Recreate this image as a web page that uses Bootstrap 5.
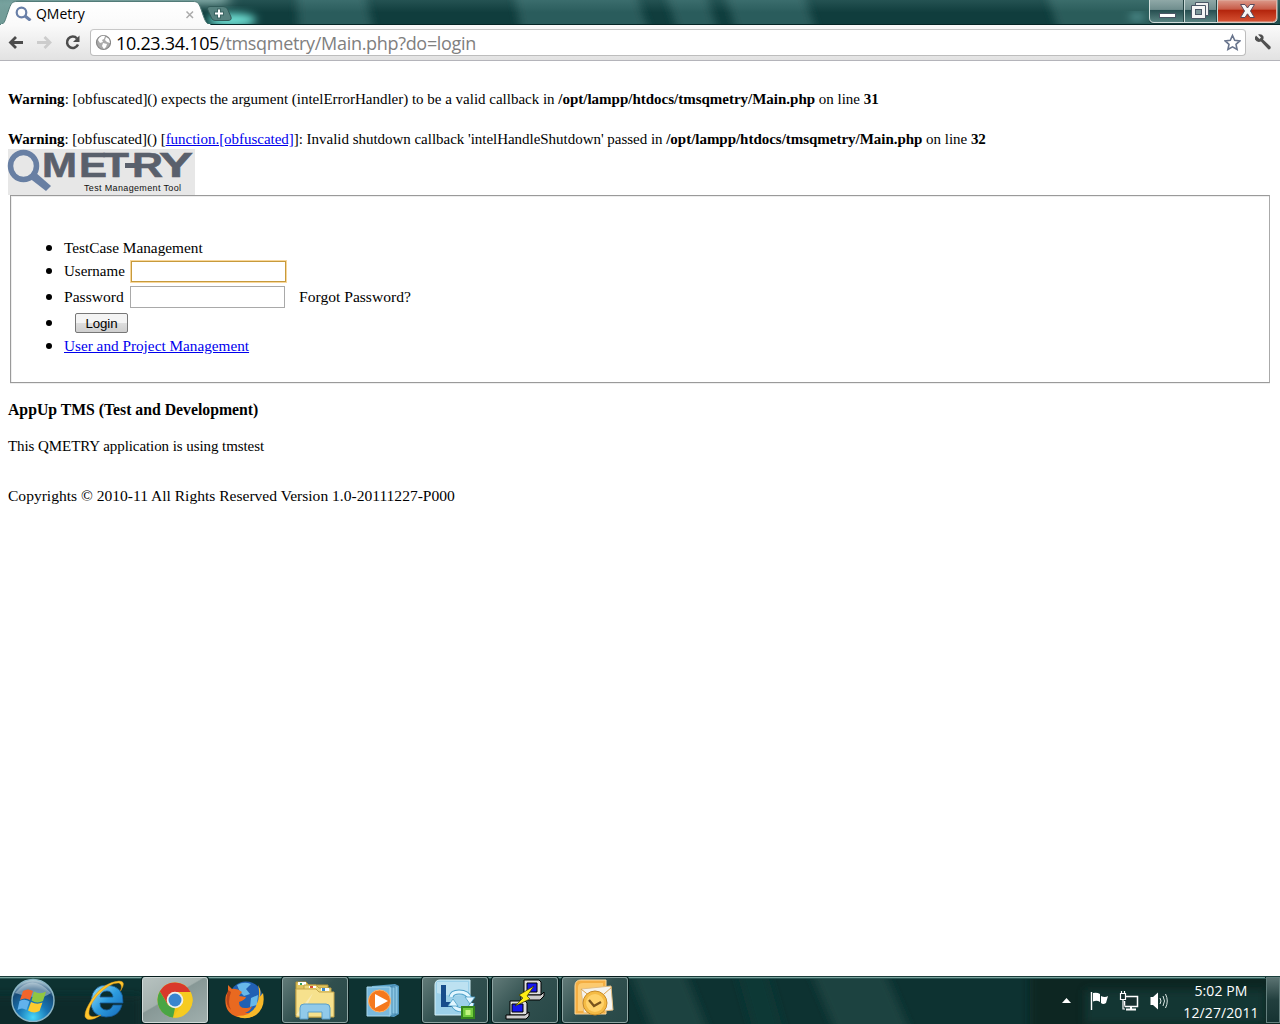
<!DOCTYPE html>
<html lang="en">
<head>
<meta charset="utf-8">
<title>QMetry</title>
<link href="https://cdn.jsdelivr.net/npm/bootstrap@5.3.0/dist/css/bootstrap.min.css" rel="stylesheet">
<script defer src="https://cdn.jsdelivr.net/npm/bootstrap@5.3.0/dist/js/bootstrap.bundle.min.js"></script>
<style>
body{width:1280px;height:1024px;overflow:hidden;background:#fff;color:#000;font-family:"Liberation Serif",serif;font-size:15px;line-height:20px}
svg{display:block;flex:none}
.ui-font{font-family:"Open Sans","Noto Sans",sans-serif}
.title-strip{height:25px;background:#174747}
.backdrop{left:0;top:0}
.tab-strip{width:232px;height:25px;padding-left:15px}
.tab-name{width:147px;margin-left:4px;font-size:14px;letter-spacing:-.05px;line-height:26px;padding-top:2px}
.win-controls{width:131px;height:25px}
.toolbar{height:36px;background:linear-gradient(#fafafa,#e2e2e2);border-bottom:1px solid #b4b4ba;padding:4px 8px 4px 8px}
.omnibox{width:1156px;height:27px;border:1px solid #bdbdbd;border-top-color:#c8c8c8;border-radius:4px;background:#fff;padding:0 4px 0 4px}
.address{font-size:18px;letter-spacing:-.31px;line-height:26px;margin-left:5px;color:#808080}
.viewport{height:915px;padding:28px 8px 0}
a.plain-link{color:#00e;text-decoration:underline}
.warn-one{letter-spacing:-.01px}
.warn-two{letter-spacing:-.027px}
.logo-art{overflow:visible}
.login-box{height:188px;margin:0 2px 17px;border:1px solid #9a9a9a;border-right-color:#aaa;box-shadow:inset 1px 1px #eee,0 1px #eee;padding:42px 0 0 13px}
.login-list{padding-left:40px}
.login-list li{height:26px;position:relative}
.login-list li:first-child,.login-list li:last-child{height:20px}
.login-list li::before{content:"";position:absolute;left:-18px;top:50%;width:6px;height:6px;margin-top:-3px;border-radius:50%;background:#000}
.item-head{font-size:15.300px}
.item-link{font-size:15.250px}
.u-lab{width:66px}
.p-lab,.forgot{font-size:15.600px}
.forgot{margin-left:14px}
.field{height:22px;width:155px;border:1px solid #a9a9a9;background:#fff;padding:0 2px;outline:0;font-size:13px}
.field-active{border:1px solid #c79a3c;box-shadow:0 0 0 1px #f8d79b;height:21px;width:155px;margin-left:1px}
.login-btn{height:20px;width:53px;margin-left:11px;border:1px solid #777;border-radius:2px;background:linear-gradient(#f4f4f4 0 48%,#ddd 52%,#cfcfcf);font:13.3px "Liberation Sans",sans-serif;padding:0;letter-spacing:-.1px}
.app-line{font-size:15.750px}
.use-line{letter-spacing:-.075px;margin-bottom:30px}
.copy-line{font-size:15.560px}
.taskbar{height:48px;padding-top:1px;background:#0d3231}
.task-row{gap:4px;padding-left:2px}
.task-slot{width:66px;height:46px;border:1px solid transparent;border-radius:3px}
.task-open{border-color:#8ea5a3;background:linear-gradient(135deg,#617a78,#304f4e 50%,#284847);box-shadow:0 0 0 1px #061c1c}
.task-front{border-color:#d0dad8;background:linear-gradient(150deg,#b7c2c0 0,#a4b1ae 42%,#879896 44%,#a0afad);box-shadow:0 0 0 1px #061c1c}
.clock{color:#fff;font-size:14px;letter-spacing:.1px;line-height:22px;width:90px;padding-top:3px}
.tray{margin-right:2px}
.peek{width:14px;height:46px;border:1px solid #64807e;background:linear-gradient(#5a7271,#223f3e 50%,#163332)}
</style>
</head>
<body>
<div class="d-flex flex-column">
<header>
<div class="title-strip position-relative d-flex justify-content-between">
<svg class="backdrop position-absolute" width="1280" height="25">
<defs>
<filter id="b1" x="-50%" y="-50%" width="200%" height="200%"><feGaussianBlur stdDeviation="4"/></filter>
<filter id="b2" x="-50%" y="-80%" width="200%" height="260%"><feGaussianBlur stdDeviation="7 4"/></filter>
<linearGradient id="shade" x2="0" y2="1"><stop offset="0" stop-color="#9cc" stop-opacity=".15"/><stop offset=".5" stop-color="#9cc" stop-opacity="0"/></linearGradient>
<linearGradient id="tabg" x2="0" y2="1"><stop stop-color="#fff"/><stop offset="1" stop-color="#fafafa"/></linearGradient>
</defs>
<rect width="1280" height="25" fill="#103d3d"/>
<g filter="url(#b1)" fill="#2b5b5b"><path d="M295 -25H361L378 50H300Z"/><path d="M510 -25H630L655 50H525Z"/><path d="M659 -25H700L724 50H684Z"/><path d="M719 -25H798L822 50H742Z"/><path d="M1040 -25H1280V50H1065Z" fill="#2a5c5a"/></g>
<rect x="-10" y="-5" width="30" height="35" fill="#739d99" filter="url(#b1)"/>
<rect x="18" y="-10" width="210" height="15" fill="#7da39f" filter="url(#b2)"/>
<ellipse cx="232" cy="20" rx="24" ry="7" fill="#6ee0d4" filter="url(#b1)"/>
<ellipse cx="1137" cy="17" rx="8" ry="3" fill="#5fa3a3" filter="url(#b1)"/>
<rect width="1280" height="25" fill="url(#shade)"/>
<path d="M208 24.5H1280" stroke="#062626"/>
<path d="M0 25C5 24 5 20 8 12C11 3 12 1.500 17 1.500H193C198 1.500 199 3 202 12C205 21 206 24 211 25Z" fill="url(#tabg)" stroke="#527b78" stroke-width="1"/>
<path d="M1 25H210" stroke="#fafafa" stroke-width="2"/>
<path d="M207.500 9Q207 6.500 210 6.500H223Q226 6.500 227.500 9L231 17Q232 20.500 228 20.500H215Q212.500 20.500 211.500 18Z" fill="#56817e" stroke="#315b59"/>
<path d="M219 8.500V18.500M214 13.500H224" stroke="#3a6462" stroke-width="4"/><path d="M219 9.500V17.500M215 13.500H223" stroke="#fff" stroke-width="2"/>
</svg>
<div class="tab-strip ui-font d-flex align-items-center position-relative">
<svg width="17" height="17" viewBox="0 0 17 17"><g transform="translate(0 2)"><circle cx="6.500" cy="6.500" r="4.800" fill="none" stroke="#687fa8" stroke-width="2.200"/><path d="M10 10L15.500 14.500" stroke="#687fa8" stroke-width="3"/></g></svg>
<div class="tab-name">QMetry</div>
<svg width="14" height="25"><path d="M3.500 11.500L10 18M10 11.500L3.500 18" stroke="#aaa" stroke-width="1.500"/></svg>
</div>
<svg class="win-controls position-relative" viewBox="0 0 131 25">
<defs><linearGradient id="wg" x2="0" y2="1"><stop stop-color="#8fa8a7"/><stop offset=".42" stop-color="#708e8e"/><stop offset=".46" stop-color="#274f51"/><stop offset="1" stop-color="#5b8583"/></linearGradient><linearGradient id="wr" x2="0" y2="1"><stop stop-color="#dc9a8b"/><stop offset=".42" stop-color="#c75b47"/><stop offset=".46" stop-color="#b3240c"/><stop offset="1" stop-color="#d65233"/></linearGradient></defs>
<path d="M0 0V19Q0 24 5 24H123Q128.500 24 128.500 19V0" fill="#173b3b"/>
<path d="M.5 0V18Q.5 22.500 5 22.500H123.500Q128 22.500 128 18V0" fill="url(#wg)" stroke="#d3dfdd"/>
<path d="M68.500 0H127.500V18Q127.500 22 123.500 22H68.500Z" fill="url(#wr)" stroke="#dfb3a6"/>
<path d="M35.500 0V22M68.500 0V22" stroke="#cadad8"/><path d="M34.500 0V22M67.500 0V22" stroke="#254544"/>
<rect x="10.500" y="13.500" width="16" height="4" fill="#fff" stroke="#4a5665"/>
<path d="M46.500 2.500H59.500V15.500H46.500Z" fill="#eee" stroke="#4a5665"/><path d="M42.500 5.500H56.500V18.500H42.500Z" fill="#f5f5f5" stroke="#4a5665"/><rect x="46.500" y="9.500" width="6" height="5" fill="#7c9699" stroke="#4a5665"/>
<path d="M91.500 4.500H96L98.500 8L101 4.500H105.500L101.500 11L105.500 17.500H101L98.500 13.800L96 17.500H91.500L95.500 11Z" fill="#f6f6f6" stroke="#59485a"/>
</svg>
</div>
<div class="toolbar ui-font d-flex justify-content-between">
<div class="d-flex">
<svg width="82" height="27"><path d="M15 13.500H3M8 8L2.500 13.500L8 19" fill="none" stroke="#4c4c4c" stroke-width="2.800"/><path d="M29 13.500H42M36.500 8L42 13.500L36.500 19" fill="none" stroke="#ccc" stroke-width="2.800"/><path d="M69 9.500A5.700 5.700 0 1 0 70 15.500" fill="none" stroke="#4c4c4c" stroke-width="2.500"/><path d="M71.500 6.500V13H65Z" fill="#4c4c4c"/></svg>
<div class="omnibox d-flex align-items-center">
<svg width="16" height="25"><circle cx="8.500" cy="12.500" r="7" fill="#aaa" stroke="#888" stroke-width="1.200"/><path d="M4 8Q7 5 10 6L9 9L7 10L8 12L5 13L3 10ZM11 7L14 9L15 13L12 12L10 10ZM8 13L12 14L11 17L9 19L7 16Z" fill="#fff"/></svg>
<div class="address flex-grow-1"><span class="text-black">10.23.34.105</span>/tmsqmetry/Main.php?do=login</div>
<svg width="17" height="25"><path d="M8.500 5.500L10.700 10.300L15.800 10.900L12 14.300L13.100 19.500L8.500 16.900L3.900 19.500L5 14.300L1.200 10.900L6.300 10.300Z" fill="#fff" stroke="#68748c" stroke-width="1.600"/></svg>
</div>
</div>
<svg width="19" height="27"><path d="M3 6.500L6.500 10L8 8.500L5 5.500Q9 4.500 10.500 7.500Q11 9.500 10 10.500L17.500 17.500Q18.500 20 15.500 20.500L8 12.500Q4 14 2 10.500Q1.500 8 3 6.500Z" fill="#505050"/></svg>
</div>
</header>
<main class="viewport">
<div class="warn-one"><b>Warning</b>: [obfuscated]() expects the argument (intelErrorHandler) to be a valid callback in <b>/opt/lampp/htdocs/tmsqmetry/Main.php</b> on line <b>31</b></div>
<div class="warn-two mt-3 pt-1"><b>Warning</b>: [obfuscated]() [<a class="plain-link" href="#">function.[obfuscated]</a>]: Invalid shutdown callback 'intelHandleShutdown' passed in <b>/opt/lampp/htdocs/tmsqmetry/Main.php</b> on line <b>32</b></div>
<svg class="logo-art" width="187" height="46" font-family="Liberation Sans, sans-serif">
<rect width="187" height="46" fill="#e7e7e7"/>
<ellipse cx="15.500" cy="17" rx="13" ry="13.500" fill="none" stroke="#687fa3" stroke-width="5.500"/><path d="M20 28L27 23L43 37L38 42Z" fill="#687fa3"/>
<g font-weight="bold" font-size="35.500" fill="#5a606c" stroke="#5a606c" stroke-width=".6"><text x="34" y="28" textLength="35" lengthAdjust="spacingAndGlyphs">M</text><text x="71" y="28" textLength="28" lengthAdjust="spacingAndGlyphs">E</text><text x="95" y="28" textLength="26" lengthAdjust="spacingAndGlyphs">T</text><text x="124" y="28" textLength="31" lengthAdjust="spacingAndGlyphs">R</text><text x="151" y="28" textLength="34" lengthAdjust="spacingAndGlyphs">Y</text></g><rect x="117" y="14" width="12" height="5" fill="#5a606c"/>
<text x="76" y="41.500" font-size="9" textLength="97" fill="#111">Test Management Tool</text>
</svg>
<div class="login-box">
<ul class="login-list list-unstyled mb-0">
<li class="item-head">TestCase Management</li>
<li class="d-flex align-items-center"><label class="u-lab" for="user">Username</label><input id="user" class="field field-active"></li>
<li class="d-flex align-items-center"><label class="u-lab p-lab" for="pass">Password</label><input id="pass" class="field" type="password"><span class="forgot">Forgot Password?</span></li>
<li class="d-flex align-items-center"><button class="login-btn">Login</button></li>
<li><a class="plain-link item-link" href="#">User and Project Management</a></li>
</ul>
</div>
<p class="app-line mb-3"><b>AppUp TMS (Test and Development)</b></p>
<p class="use-line">This QMETRY application is using tmstest</p>
<p class="copy-line mb-0">Copyrights © 2010-11 All Rights Reserved Version 1.0-20111227-P000</p>
</main>
<footer class="taskbar position-relative d-flex justify-content-between">
<svg class="backdrop position-absolute" width="1280" height="48">
<rect width="1280" height="48" fill="#0d3231"/>
<g filter="url(#b1)"><path d="M627 -10H682L710 60H655Z" fill="#1f4241"/><path d="M808 -10H882L912 60H838Z" fill="#1f4241"/><path d="M735 -10H765L785 60H755Z" fill="#113736"/><rect x="1030" y="-10" width="260" height="70" fill="#082624"/><rect x="-10" y="20" width="150" height="40" fill="#0a2a29"/></g>
<rect x="1085" y="14" width="180" height="34" fill="#183d3a" filter="url(#b1)" opacity=".7"/>
<path d="M0 .5H1280" stroke="#193c3a"/><path d="M0 1.500H1265" stroke="#7ba49e"/><path d="M0 2.500H1280" stroke="#2c5956"/>
</svg>
<nav class="task-row d-flex position-relative">
<svg class="task-slot" viewBox="1 1 64 44"><defs><radialGradient id="orb" cx=".5" cy=".9" r=".9"><stop stop-color="#48d7fa"/><stop offset=".4" stop-color="#1875b5"/><stop offset=".75" stop-color="#174a76"/><stop offset="1" stop-color="#c7dbe2"/></radialGradient></defs><circle cx="31" cy="23.500" r="21" fill="url(#orb)" stroke="#8bb5c5" stroke-width="1.500"/><path d="M13 16Q30 -5 49 16Q40 22 31 20Q22 19 13 16Z" fill="#dae7ec" opacity=".45"/><path d="M21 14Q26 11 31 14L28 23Q23 20 18 23Z" fill="#f2652b"/><path d="M32 14.500Q38 18 44 14.500L41 24Q35 27 29.500 23.500Z" fill="#91c640"/><path d="M17.500 24Q23 21.500 27.500 24.500L24.500 33Q20 30 15.500 33Z" fill="#62b2ec"/><path d="M29 25Q35 28 40.500 25.500L37.500 34Q32 37 26 33.500Z" fill="#fecb2f"/></svg>
<svg class="task-slot" viewBox="1 1 64 44"><defs><linearGradient id="ie" x2="1" y2="1"><stop stop-color="#9ce2fc"/><stop offset=".5" stop-color="#2d9cdf"/><stop offset="1" stop-color="#1468b9"/></linearGradient></defs><path d="M50 28Q47 40 34 40Q18 39 19 23Q21 8 35 8Q52 9 51 26H28Q28 33 35 33Q39 33 41 28ZM28 20H41Q40 14 35 14Q29 14 28 20Z" fill="url(#ie)" stroke="#17578f" stroke-width=".8" fill-rule="evenodd"/><path d="M48.500 14Q55 4 47 4Q32 5 20 22Q9 39 15 42Q20 44 29 38Q18 42 17 37Q16 30 25 19Q38 5 47 6Q51 8 48.500 14Z" fill="#ffc72e" stroke="#d89216" stroke-width=".5"/></svg>
<svg class="task-slot task-front" viewBox="0 1 64 44"><circle cx="32" cy="23" r="17.500" fill="#f3c518"/><path d="M16.800 14.200A17.500 17.500 0 0 1 47.500 15H32L24.500 27Z" fill="#d9392b"/><path d="M16.800 14.200L25 28L32 31L30 40.400A17.500 17.500 0 0 1 16.800 14.200Z" fill="#49a544"/><path d="M39.500 27L30 40.500A17.500 17.500 0 0 0 47.500 15H32Z" fill="#f6cb22"/><circle cx="32" cy="23" r="8.300" fill="#f0f0eb"/><circle cx="32" cy="23" r="6.500" fill="#3985cf"/></svg>
<svg class="task-slot" viewBox="0 0 64 44"><circle cx="33" cy="20" r="16.500" fill="#2160b3"/><path d="M24 7Q31 3 38 6L33 11L37 16L31 18L27 14ZM38 20L45 17L44 27L37 29Z" fill="#67b8ea"/><path d="M15 7L19 11Q24 10 29 14L26 18L33 19Q32 22 26 24Q26 30 32 30Q37 30 39 28Q38 33 32 35Q42 36 48 28Q45 40 31 40Q16 39 13 28Q11 18 15 14Z" fill="#e96920"/><path d="M45 7Q49 13 46.500 19L50 15Q53 29 43 37Q32 43 24 38Q38 38 43 28Q48 18 45 7Z" fill="#f7b829"/><path d="M15 12L18 14Q14 25 18 32Q12 27 14 17Z" fill="#b94519"/></svg>
<svg class="task-slot task-open" viewBox="1 1 64 44"><path d="M14 5H24L27 8H46V38H14Z" fill="#dfc45f" stroke="#b99737"/><path d="M16 5H24V8H16Z" fill="#fff"/><path d="M18 6H20V8H18Z" fill="#31a060"/><path d="M22 8H34L37 11H49V40H22Z" fill="#edd978" stroke="#bca045"/><path d="M27 9H34V11H27Z" fill="#fff"/><path d="M28 9H31V11H28Z" fill="#d95034"/><path d="M14 12H34L37 15H52V40H14Z" fill="#f6e18d" stroke="#c5a54b"/><path d="M39 11H47V14H39Z" fill="#f6fbff"/><path d="M40 11H43V14H40Z" fill="#3b88ca"/><path d="M14 38L31 16L20 39Z" fill="#fff" opacity=".35"/><path d="M18 42V31Q18 27 22 27H44Q48 27 48 31V42H40V35H26V42Z" fill="#91caea" stroke="#5b9ec8"/></svg>
<svg class="task-slot" viewBox="1 1 64 44"><path d="M20 9L43 7L47 9V37L42 40L20 37Z" fill="#579fc7"/><path d="M35 10H43V38H35ZM40 9H46V37H40Z" fill="#8ac7e4" stroke="#397fa8" stroke-width=".7"/><path d="M15 10H38V39H15Z" fill="#79b9dd" stroke="#a9d8ed"/><circle cx="27.500" cy="24" r="11" fill="#f5791d" stroke="#ffb56a"/><path d="M23 17L36 24L23 31Z" fill="#fff"/></svg>
<svg class="task-slot task-open" viewBox="1 1 64 44"><path d="M13 38V8Q13 3 18 3H48V32Q48 38 42 38Z" fill="#9cd0e9" stroke="#d4f0f8"/><path d="M15 5H46V17Q31 21 15 16Z" fill="#d4edf7" opacity=".6"/><path d="M19 8H24V25H33V30H19Z" fill="#174c8b"/><g fill="none" stroke-linejoin="round"><path d="M29 20Q30 15 37 15Q46 15 48 22M50 26Q49 33 41 33Q33 33 31 27" stroke="#4a9ec7" stroke-width="5"/><path d="M29 20Q30 15 37 15Q46 15 48 22M50 26Q49 33 41 33Q33 33 31 27" stroke="#e1f6ff" stroke-width="3.200"/></g><path d="M43 20H53L48 27ZM26 29L31 22L36 29Z" fill="#e1f6ff" stroke="#4a9ec7" stroke-width=".8"/><rect x="40" y="30" width="12" height="11" fill="#72cc3e" stroke="#35861e" stroke-width="2"/><rect x="43.500" y="33" width="5" height="5" fill="#c1f57f"/></svg>
<svg class="task-slot task-open" viewBox="1 1 64 44"><g stroke="#000" stroke-width="1"><path d="M32 3H47L49 5V18H32Z" fill="#ddd"/><path d="M35 6H45V15H35Z" fill="#1717ee"/><path d="M29 18H49L52 15V19L48 23H29Z" fill="#ccc"/><path d="M18 24H33L35 26V38H18Z" fill="#ddd"/><path d="M20 27H31V35H20Z" fill="#1717ee"/><path d="M14 38H33L37 35V39L34 42H14Z" fill="#ccc"/></g><path d="M42 9L27 18L31 21L23 29L38 22L35 19Z" fill="#ffed15" stroke="#383600" stroke-width=".7"/></svg>
<svg class="task-slot task-open" viewBox="1 1 64 44"><path d="M13 37V9Q13 3 19 3H44V37Z" fill="#f4ae43" stroke="#ffd99c"/><path d="M16 34V10Q16 6 21 6H41V15L24 34Z" fill="#ffd582" opacity=".7"/><path d="M19 12L49 9L51 33L22 36Z" fill="#f5f3ef" stroke="#e2be83"/><path d="M19 12L34 24L50 10" fill="none" stroke="#dda34d"/><circle cx="33" cy="26" r="12" fill="#f5bb45" stroke="#c68a27" stroke-width="1"/><circle cx="33" cy="26" r="9" fill="#ffd26a"/><path d="M27 23L32 29L39 25" fill="none" stroke="#79531c" stroke-width="2.300"/></svg>
</nav>
<div class="d-flex position-relative ui-font">
<svg class="tray" width="114" height="46" viewBox="1060 977 114 46"><path d="M1062 1003L1066.500 998L1071 1003Z" fill="#fff"/><path d="M1091.500 992V1010" stroke="#fff" stroke-width="1.400"/><path d="M1093 993Q1097 992 1100 994V1002Q1097 1000 1093 1001.500ZM1101 996Q1105 998 1108 996L1106 1003Q1103 1005 1101 1003Z" fill="#fff"/><path d="M1125.500 996.500H1137.500V1006.500H1124.500V1001" fill="#17302f" stroke="#fff" stroke-width="1.500"/><path d="M1131 1007V1010M1126 1009.500H1136" stroke="#fff" stroke-width="2"/><path d="M1120.500 993.500H1125.500V999.500H1120.500ZM1121.500 991V993M1124.500 991V993M1123 1000V1009H1125" fill="#17302f" stroke="#fff" stroke-width="1.200"/><path d="M1150.500 997H1153L1158 992.500V1009.500L1153 1005H1150.500Z" fill="#fff"/><path d="M1160 998Q1162 1001 1160 1004M1163 996Q1166 1001 1163 1006M1165.500 994Q1169 1001 1165.500 1008" fill="none" stroke="#dce8e5" stroke-width="1"/></svg>
<div class="clock text-center">
<div>5:02 PM</div><div>12/27/2011</div></div>
<div class="peek"></div>
</div>
</footer>
</div>
</body>
</html>
